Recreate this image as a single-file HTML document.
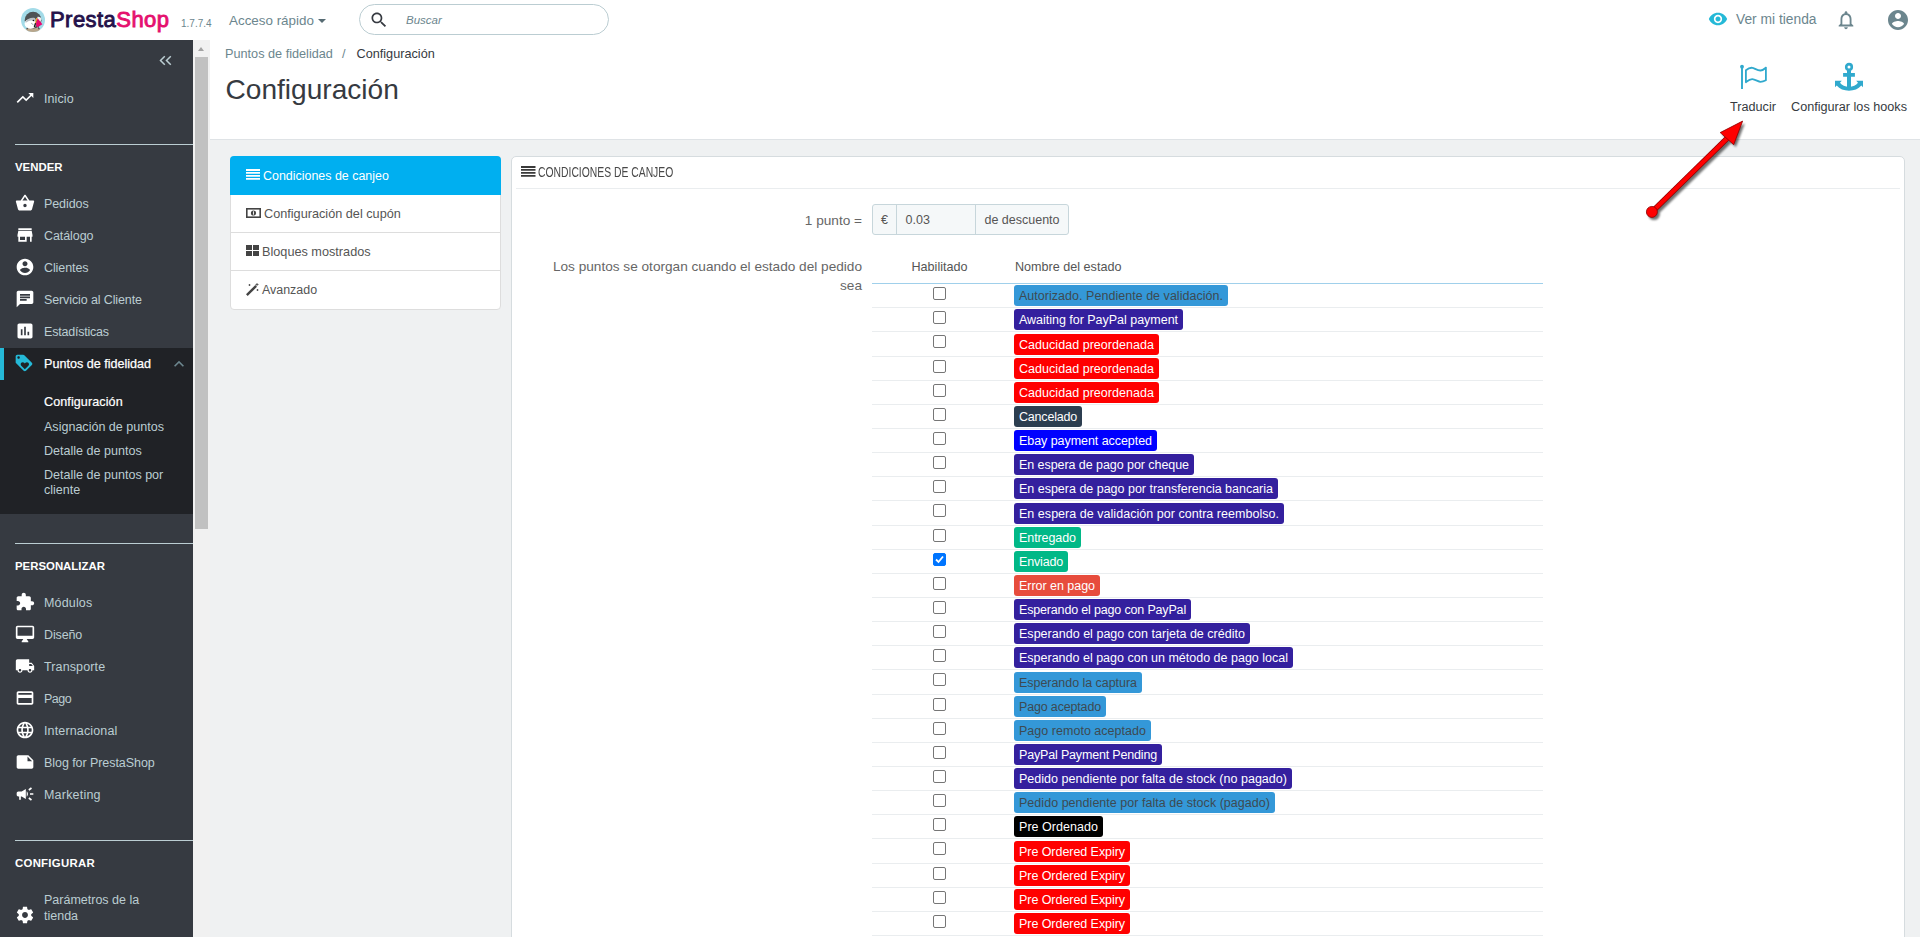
<!DOCTYPE html>
<html lang="es">
<head>
<meta charset="utf-8">
<title>Configuración • Puntos de fidelidad</title>
<style>
*{box-sizing:border-box}
html,body{margin:0;padding:0}
body{width:1920px;height:937px;overflow:hidden;position:relative;background:#eff1f2;font-family:"Liberation Sans",sans-serif;font-size:13px;color:#363a41}
a{text-decoration:none;color:inherit}
.abs{position:absolute}
/* ---------- top header ---------- */
#header{position:absolute;left:0;top:0;width:1920px;height:40px;background:#fff;z-index:5}
#logo-circle{position:absolute;left:21px;top:8px;width:24px;height:24px}
#logo-text{position:absolute;left:50px;top:6px;font-size:22px;line-height:28px;font-weight:400;letter-spacing:.45px;white-space:nowrap;-webkit-text-stroke:.9px}
#logo-text .a{color:#25124a}
#logo-text .b{color:#e5106e}
#version{position:absolute;left:181px;top:17px;font-size:10px;line-height:14px;color:#6c868e}
#quick{position:absolute;left:229px;top:12px;font-size:13.4px;line-height:18px;color:#6c868e;white-space:nowrap}
#quick .caret{display:inline-block;width:0;height:0;border-left:4.5px solid transparent;border-right:4.5px solid transparent;border-top:4.5px solid #566b73;vertical-align:middle;margin-left:4px;margin-top:-1px}
#search{position:absolute;left:359px;top:4px;width:250px;height:31px;border:1px solid #bbcdd2;border-radius:16px;background:#fff}
#search svg{position:absolute;left:9px;top:5px;width:20px;height:20px;fill:#363a41}
#search span{position:absolute;left:46px;top:7px;font-style:italic;font-size:11.5px;line-height:17px;color:#6c868e}
#shop{position:absolute;left:1736px;top:11px;font-size:13.8px;line-height:18px;color:#6c868e;white-space:nowrap}
/* ---------- sidebar ---------- */
#nav{position:absolute;left:0;top:40px;width:193px;height:897px;background:#363a41;color:#bbcdd2;font-size:12.500px;overflow:hidden}
#sb{position:absolute;left:193px;top:40px;width:17px;height:897px;background:#f1f1f1}
#sb .thumb{position:absolute;left:2px;top:17px;width:13px;height:472px;background:#c1c1c1}
#sb .up{position:absolute;left:5px;top:7px;width:0;height:0;border-left:3.5px solid transparent;border-right:3.5px solid transparent;border-bottom:4px solid #a3a3a3}
.mi{position:absolute;left:0;width:193px;height:32px}
.mi svg{position:absolute;left:14.600px;top:6.300px;width:20px;height:20px;fill:#fff}
.mi span{position:absolute;left:44px;top:9px;line-height:16px;white-space:nowrap}
.sep{position:absolute;left:15px;width:178px;height:1px;background:#bbcdd2}
.cat{position:absolute;left:15px;font-weight:700;color:#fff;font-size:11.4px;line-height:16px;white-space:nowrap}
.sub{position:absolute;left:44px;line-height:15px;color:#bbcdd2;font-size:12.55px}
/* ---------- page head ---------- */
#pagehead{position:absolute;left:210px;top:40px;width:1710px;height:100px;background:#fff;border-bottom:1px solid #dfe3e6}
#crumb{position:absolute;left:15px;top:6px;font-size:12.7px;line-height:16px;color:#6c868e;white-space:nowrap}
#crumb b{font-weight:400;color:#363a41}
#title{position:absolute;left:15.500px;top:32px;font-size:28.100px;line-height:36px;font-weight:400;color:#363a41;margin:0;white-space:nowrap}
.tb{position:absolute;top:26px;text-align:center;font-size:12.65px;line-height:16px;color:#363a41;white-space:nowrap}
.tb svg{display:block;margin:0 auto}
/* ---------- content ---------- */
#tabs{position:absolute;left:230px;top:156px;width:271px;height:154px;background:#fff;border:1px solid #ddd;border-radius:4px}
#tabs .it{position:absolute;left:0;width:269px;height:38px;border-top:1px solid #ddd;font-size:12.700px;line-height:16px;color:#555}
#tabs .it span{position:absolute;left:32px;top:11px;white-space:nowrap}
#tabs .it svg{position:absolute;left:15px;top:12px}
#tabs .act{position:absolute;left:-1px;top:-1px;width:271px;height:39px;background:#00aff0;color:#fff;border:0;border-radius:4px 4px 0 0}
#panel{position:absolute;left:511px;top:156px;width:1394px;height:800px;background:#fff;border:1px solid #d6dcdf;border-radius:5px}
#ph{position:absolute;left:4px;top:0;width:1384px;height:32px;border-bottom:1px solid #eaedef}
#ph svg{position:absolute;left:4.600px;top:9px;overflow:visible}
#ph span{position:absolute;left:22px;top:6px;font-size:14px;line-height:18px;color:#484848;white-space:nowrap;transform:scaleX(.74);transform-origin:0 50%}
.lbl{position:absolute;text-align:right;font-size:13.630px;line-height:19px;color:#666}
#ig{position:absolute;left:360px;top:47px;width:197px;height:31px;border:1px solid #c7d6db;border-radius:3px;background:#f5f8f9;font-size:12.5px;color:#555}
#ig div{position:absolute;top:0;height:29px;line-height:31px}
table#st{position:absolute;left:360px;top:95.640px;width:671px;border-collapse:collapse;font-size:12.6px;color:#555}
#st th{font-weight:400;height:31px;padding:0 0 2px 0;border-bottom:1px solid #a0d0eb;vertical-align:middle;color:#555}
#st th.c1{width:135px;text-align:center}
#st th.c2{text-align:left;padding-left:8px}
#st td{height:24.143px;padding:0;border-bottom:1px solid #eaedef;vertical-align:middle}
#st td.c1{text-align:center}
#st td.c2{padding-left:7px}
.cb{display:inline-block;width:13px;height:13px;border:1px solid #767676;border-radius:2px;background:#fff;vertical-align:middle;position:relative;top:-2.600px}
.cb.on{background:#0075ff;border-color:#0075ff}
.bd{display:inline-block;height:21px;line-height:22px;padding:0 5px;border-radius:3px;color:#fff;font-size:12.5px;white-space:nowrap;vertical-align:middle}
#st tr:nth-child(7n+4) .bd{position:relative;top:1px}
.c-blue{background:#3498d8;color:#3d4a52}
.c-ind{background:#34209e}
.c-red{background:#ff0000}
.c-can{background:#2c3e50}
.c-eb{background:#0000ff}
.c-gr{background:#01b887}
.c-err{background:#e74c3c}
.c-blk{background:#000}
</style>
</head>
<body>
<!-- HEADER -->
<div id="header">
  <svg id="logo-circle" viewBox="0 0 24 24"><defs><clipPath id="lc"><circle cx="12" cy="12" r="12"/></clipPath></defs><circle cx="12" cy="12" r="12" fill="#a3dbe8"/><g clip-path="url(#lc)"><ellipse cx="12" cy="22.600" rx="7.600" ry="3.600" fill="#b9a68c"/><path d="M5.200 20.800l1.300-1.900 1 .6-1 1.900zM18.900 20.800l-1.300-1.900-1 .6 1 1.900z" fill="#4e5355"/><circle cx="12.100" cy="12.200" r="8.400" fill="#4e5355"/><ellipse cx="9.600" cy="15.800" rx="6" ry="4.900" fill="#fff"/><path d="M4.300 14.500c1.500-3.300 5-5.300 9.500-4.600l1.500 2.300-4 3.300z" fill="#b9c0c5"/><path d="M4.600 15.500c2-2.600 5.500-3.700 9-2.300l-1 4z" fill="#fff"/><path d="M16.500 8.800c1.700-.5 3.300.3 4 2.200l-1.300 3.500-3.200-3z" fill="#eef0f0"/><path d="M15.200 9.900l1.300.3-1.700 5.600-1-.3z" fill="#f7a823"/><path d="M13.900 15l1.300.3-1 4-1.500-.5z" fill="#1a1a1a"/><path d="M16.600 10.200L21.400 16.300 15.900 19.500 14.900 16z" fill="#e9076f"/><circle cx="12.400" cy="12.500" r=".75" fill="#111"/><path d="M10.200 15.200l2.300 1.700" stroke="#555" stroke-width=".5"/></g></svg>
  <div id="logo-text"><span class="a">Presta</span><span class="b">Shop</span></div>
  <div id="version">1.7.7.4</div>
  <div id="quick">Acceso rápido<i class="caret"></i></div>
  <div id="search"><svg viewBox="0 0 24 24"><path d="M15.5 14h-.79l-.28-.27C15.41 12.59 16 11.11 16 9.5 16 5.91 13.09 3 9.5 3S3 5.91 3 9.5 5.91 16 9.5 16c1.61 0 3.09-.59 4.23-1.57l.27.28v.79l5 4.990L20.49 19l-4.990-5zm-6 0C7.01 14 5 11.990 5 9.500S7.010 5 9.500 5 14 7.010 14 9.500 11.990 14 9.500 14z"/></svg><span>Buscar</span></div>
  <svg class="abs" style="left:1708px;top:9px;width:20px;height:20px;fill:#25b9d7" viewBox="0 0 24 24"><path d="M12 4.500C7 4.500 2.730 7.610 1 12c1.730 4.390 6 7.500 11 7.500s9.270-3.110 11-7.500c-1.730-4.390-6-7.500-11-7.500zM12 17c-2.760 0-5-2.240-5-5s2.240-5 5-5 5 2.240 5 5-2.240 5-5 5zm0-8c-1.660 0-3 1.340-3 3s1.340 3 3 3 3-1.340 3-3-1.340-3-3-3z"/></svg>
  <div id="shop">Ver mi tienda</div>
  <svg class="abs" style="left:1835px;top:9px;width:22px;height:22px;fill:#6c868e" viewBox="0 0 24 24"><path d="M12 22c1.100 0 2-.9 2-2h-4c0 1.100.9 2 2 2zm6-6v-5c0-3.070-1.630-5.640-4.500-6.320V4c0-.830-.670-1.500-1.500-1.500s-1.500.670-1.500 1.500v.680C7.640 5.360 6 7.920 6 11v5l-2 2v1h16v-1l-2-2zm-2 1H8v-6c0-2.480 1.510-4.500 4-4.500s4 2.020 4 4.500v6z"/></svg>
  <svg class="abs" style="left:1886px;top:8px;width:24px;height:24px;fill:#6c868e" viewBox="0 0 24 24"><path d="M12 2C6.480 2 2 6.480 2 12s4.480 10 10 10 10-4.480 10-10S17.520 2 12 2zm0 3c1.660 0 3 1.340 3 3s-1.340 3-3 3-3-1.340-3-3 1.340-3 3-3zm0 14.200c-2.500 0-4.710-1.280-6-3.220.030-1.990 4-3.080 6-3.080 1.990 0 5.970 1.090 6 3.080-1.290 1.940-3.500 3.220-6 3.220z"/></svg>
</div>
<div id="nav">
  <svg class="abs" style="left:158px;top:14px;width:15px;height:12px" viewBox="0 0 15 12"><path d="M6.800 2.200L2.500 6.500l4.300 4.300M12.800 2.200L8.500 6.500l4.300 4.300" fill="none" stroke="#bbcdd2" stroke-width="1.500"/></svg>
  <a class="mi" style="top:42px"><svg viewBox="0 0 24 24"><path d="M16 6l2.290 2.290-4.880 4.880-4-4L2 16.590 3.410 18l6-6 4 4 6.300-6.290L22 12V6z"/></svg><span style="letter-spacing:0.085px">Inicio</span></a>
  <div class="sep" style="top:104px"></div>
  <div class="cat" style="top:119px">VENDER</div>
  <a class="mi" style="top:147px"><svg viewBox="0 0 24 24"><path d="M17.210 9l-4.380-6.560c-.19-.28-.51-.42-.83-.42-.32 0-.64.14-.83.430L6.790 9H2c-.55 0-1 .45-1 1 0 .09.010.18.040.27l2.540 9.270c.23.84 1 1.460 1.920 1.460h13c.92 0 1.690-.62 1.930-1.460l2.540-9.270L23 10c0-.55-.45-1-1-1h-4.790zM9 9l3-4.400L15 9H9zm3 8c-1.100 0-2-.9-2-2s.9-2 2-2 2 .9 2 2-.9 2-2 2z"/></svg><span style="letter-spacing:-0.084px">Pedidos</span></a>
  <a class="mi" style="top:179px"><svg viewBox="0 0 24 24"><path d="M20 4H4v2h16V4zm1 10v-2l-1-5H4l-1 5v2h1v6h10v-6h4v6h2v-6h1zm-9 4H6v-4h6v4z"/></svg><span style="letter-spacing:-0.081px">Catálogo</span></a>
  <a class="mi" style="top:211px"><svg viewBox="0 0 24 24"><path d="M12 2C6.480 2 2 6.480 2 12s4.480 10 10 10 10-4.480 10-10S17.520 2 12 2zm0 3c1.660 0 3 1.340 3 3s-1.340 3-3 3-3-1.340-3-3 1.340-3 3-3zm0 14.200c-2.500 0-4.710-1.280-6-3.220.030-1.990 4-3.080 6-3.080 1.990 0 5.970 1.090 6 3.080-1.290 1.940-3.500 3.220-6 3.220z"/></svg><span style="letter-spacing:-0.096px">Clientes</span></a>
  <a class="mi" style="top:243px"><svg viewBox="0 0 24 24"><path d="M20 2H4c-1.100 0-1.990.9-1.990 2L2 22l4-4h14c1.100 0 2-.9 2-2V4c0-1.100-.9-2-2-2zM6 9h12v2H6V9zm8 5H6v-2h8v2zm4-6H6V6h12v2z"/></svg><span style="letter-spacing:-0.113px">Servicio al Cliente</span></a>
  <a class="mi" style="top:275px"><svg viewBox="0 0 24 24"><path d="M19 3H5c-1.100 0-2 .9-2 2v14c0 1.100.9 2 2 2h14c1.100 0 2-.9 2-2V5c0-1.100-.9-2-2-2zM9 17H7v-7h2v7zm4 0h-2V7h2v10zm4 0h-2v-4h2v4z"/></svg><span style="letter-spacing:-0.208px">Estadísticas</span></a>
  <div class="abs" style="left:0;top:308px;width:193px;height:166px;background:#202226"></div>
  <div class="abs" style="left:0;top:308px;width:4px;height:32px;background:#25b9d7"></div>
  <a class="mi" style="top:307px;color:#fff;-webkit-text-stroke:.25px #fff;font-size:12.6px"><svg viewBox="0 0 24 24" style="fill:#25b9d7;left:14.200px"><path d="M21.410 11.580l-9-9C12.050 2.220 11.550 2 11 2H4c-1.100 0-2 .9-2 2v7c0 .55.220 1.050.590 1.420l9 9c.36.36.86.58 1.410.58.55 0 1.050-.22 1.410-.59l7-7c.37-.36.59-.86.59-1.410 0-.55-.23-1.060-.59-1.420zM5.500 7C4.670 7 4 6.330 4 5.500S4.670 4 5.500 4 7 4.670 7 5.500 6.330 7 5.500 7zm11.770 8.270L13 19.540l-4.270-4.270C8.280 14.810 8 14.190 8 13.500c0-1.380 1.120-2.500 2.500-2.500.69 0 1.320.28 1.770.74l.73.720.73-.73c.45-.45 1.080-.73 1.770-.73 1.380 0 2.500 1.120 2.500 2.500 0 .69-.28 1.320-.73 1.770z"/></svg><span style="letter-spacing:0">Puntos de fidelidad</span></a>
  <svg class="abs" style="left:168.500px;top:313.500px;width:20px;height:20px;fill:#6c868e" viewBox="0 0 24 24"><path d="M7.410 15.410L12 10.830l4.590 4.580L18 14l-6-6-6 6z"/></svg>
  <div class="sub" style="top:355px;color:#fff;-webkit-text-stroke:.22px #fff;letter-spacing:.1px">Configuración</div>
  <div class="sub" style="top:380px">Asignación de puntos</div>
  <div class="sub" style="top:404px">Detalle de puntos</div>
  <div class="sub" style="top:428px;width:140px">Detalle de puntos por cliente</div>
  <div class="sep" style="top:503px"></div>
  <div class="cat" style="top:518px">PERSONALIZAR</div>
  <a class="mi" style="top:546px"><svg viewBox="0 0 24 24"><path d="M20.500 11H19V7c0-1.100-.9-2-2-2h-4V3.500C13 2.120 11.880 1 10.500 1S8 2.120 8 3.500V5H4c-1.100 0-1.990.9-1.990 2v3.800H3.500c1.490 0 2.700 1.210 2.700 2.700s-1.210 2.700-2.700 2.700H2V20c0 1.100.9 2 2 2h3.800v-1.500c0-1.490 1.210-2.700 2.700-2.700 1.490 0 2.700 1.210 2.700 2.700V22H17c1.100 0 2-.9 2-2v-4h1.500c1.380 0 2.500-1.120 2.500-2.500S21.880 11 20.500 11z"/></svg><span style="letter-spacing:0.164px">Módulos</span></a>
  <a class="mi" style="top:578px"><svg viewBox="0 0 24 24"><path d="M21 2H3c-1.100 0-2 .9-2 2v12c0 1.100.9 2 2 2h7l-2 3v1h8v-1l-2-3h7c1.100 0 2-.9 2-2V4c0-1.100-.9-2-2-2zm0 12H3V4h18v10z"/></svg><span style="letter-spacing:-0.12px">Diseño</span></a>
  <a class="mi" style="top:610px"><svg viewBox="0 0 24 24"><path d="M20 8h-3V4H3c-1.100 0-2 .9-2 2v11h2c0 1.660 1.340 3 3 3s3-1.340 3-3h6c0 1.660 1.340 3 3 3s3-1.340 3-3h2v-5l-3-4zM6 18.500c-.83 0-1.500-.67-1.500-1.500s.67-1.500 1.500-1.500 1.500.67 1.500 1.500-.67 1.500-1.500 1.500zm13.500-9l1.960 2.500H17V9.500h2.500zm-1.500 9c-.83 0-1.500-.67-1.500-1.500s.67-1.500 1.500-1.500 1.500.67 1.500 1.500-.67 1.500-1.500 1.500z"/></svg><span style="letter-spacing:0.122px">Transporte</span></a>
  <a class="mi" style="top:642px"><svg viewBox="0 0 24 24"><path d="M20 4H4c-1.110 0-1.990.89-1.990 2L2 18c0 1.110.89 2 2 2h16c1.110 0 2-.89 2-2V6c0-1.110-.89-2-2-2zm0 14H4v-6h16v6zm0-10H4V6h16v2z"/></svg><span style="letter-spacing:-0.526px">Pago</span></a>
  <a class="mi" style="top:674px"><svg viewBox="0 0 24 24"><path d="M11.990 2C6.470 2 2 6.480 2 12s4.470 10 9.990 10C17.520 22 22 17.520 22 12S17.520 2 11.990 2zm6.930 6h-2.950c-.32-1.250-.78-2.450-1.380-3.560 1.840.63 3.370 1.910 4.330 3.560zM12 4.040c.83 1.200 1.480 2.530 1.910 3.960h-3.820c.43-1.430 1.080-2.760 1.910-3.960zM4.260 14C4.100 13.360 4 12.690 4 12s.1-1.360.26-2h3.380c-.08.66-.14 1.320-.14 2 0 .68.060 1.340.14 2H4.260zm.82 2h2.950c.32 1.250.78 2.450 1.380 3.560-1.840-.63-3.370-1.900-4.330-3.560zm2.950-8H5.080c.96-1.660 2.490-2.930 4.330-3.560C8.810 5.550 8.350 6.750 8.030 8zM12 19.960c-.83-1.200-1.480-2.530-1.910-3.960h3.820c-.43 1.430-1.080 2.760-1.910 3.960zM14.340 14H9.660c-.09-.66-.16-1.320-.16-2 0-.68.070-1.350.16-2h4.680c.09.65.16 1.320.16 2 0 .68-.07 1.340-.16 2zm.25 5.560c.6-1.110 1.060-2.310 1.380-3.560h2.950c-.96 1.650-2.490 2.930-4.330 3.560zM16.360 14c.08-.66.14-1.320.14-2 0-.68-.06-1.340-.14-2h3.380c.16.64.26 1.310.26 2s-.1 1.360-.26 2h-3.380z"/></svg><span style="letter-spacing:0.14px">Internacional</span></a>
  <a class="mi" style="top:706px"><svg viewBox="0 0 24 24"><path d="M22 10l-6-6H4c-1.100 0-2 .9-2 2v12.010c0 1.100.9 1.990 2 1.990l16-.010c1.100 0 2-.89 2-1.990v-8zm-7-4.500l5.500 5.500H15V5.500z"/></svg><span style="letter-spacing:-0.062px">Blog for PrestaShop</span></a>
  <a class="mi" style="top:738px"><svg viewBox="0 0 24 24"><path d="M18 11v2h4v-2h-4zm-2 6.610c.96.71 2.210 1.650 3.200 2.390.4-.53.8-1.070 1.200-1.600-.99-.74-2.240-1.680-3.200-2.400-.4.540-.8 1.080-1.200 1.610zM20.400 5.600c-.4-.53-.8-1.070-1.200-1.600-.99.74-2.240 1.680-3.200 2.400.4.530.8 1.070 1.200 1.600.96-.72 2.210-1.650 3.200-2.400zM4 9c-1.100 0-2 .9-2 2v2c0 1.100.9 2 2 2h1v4h2v-4h1l5 3V6L8 9H4zm11.500 3c0-1.330-.58-2.530-1.500-3.350v6.690c.92-.81 1.500-2.010 1.500-3.340z"/></svg><span style="letter-spacing:0.201px">Marketing</span></a>
  <div class="sep" style="top:800px"></div>
  <div class="cat" style="top:815px;letter-spacing:.27px">CONFIGURAR</div>
  <a class="mi" style="top:851px"><svg viewBox="0 0 24 24" style="top:14px"><path d="M19.430 12.980c.04-.32.070-.64.070-.98s-.03-.66-.07-.98l2.110-1.650c.19-.15.240-.42.120-.64l-2-3.460c-.12-.22-.39-.3-.61-.22l-2.490 1c-.52-.4-1.080-.73-1.690-.98l-.38-2.650C14.460 2.180 14.250 2 14 2h-4c-.25 0-.46.18-.49.420l-.38 2.650c-.61.250-1.170.59-1.690.98l-2.490-1c-.23-.09-.49 0-.61.220l-2 3.460c-.13.220-.07.49.120.64l2.110 1.650c-.04.320-.07.650-.07.980s.03.660.07.980l-2.110 1.650c-.19.150-.24.420-.12.640l2 3.460c.12.220.39.3.61.220l2.490-1c.52.4 1.080.73 1.690.98l.38 2.650c.03.240.24.420.49.420h4c.25 0 .46-.18.490-.42l.38-2.650c.61-.25 1.170-.59 1.690-.98l2.490 1c.23.090.49 0 .61-.22l2-3.460c.12-.22.07-.49-.12-.64l-2.110-1.650zM12 15.500c-1.930 0-3.500-1.570-3.500-3.500s1.570-3.500 3.500-3.500 3.500 1.570 3.500 3.500-1.570 3.500-3.500 3.500z"/></svg><span style="top:2px;white-space:normal;width:130px;line-height:15.600px">Parámetros de la tienda</span></a>
</div>
<div id="sb"><i class="up"></i><div class="thumb"></div></div>

<div id="pagehead">
  <div id="crumb">Puntos de fidelidad<span style="margin:0 11px 0 9px">/</span><b>Configuración</b></div>
  <h1 id="title">Configuración</h1>
  <svg class="abs" style="left:1525px;top:20px" width="36" height="32" viewBox="0 0 36 32"><circle cx="7" cy="6.750" r="1.900" fill="#30a9cd"/><path d="M7 6.750V28.900" stroke="#30a9cd" stroke-width="1.900" fill="none"/><path d="M10.900 10.200C13 8.500 15.500 7.600 17.300 7.800S22.500 10.600 25.500 10.500S29.500 8.500 30.900 7.600L30.900 20.300C29.500 21 27.500 21.800 25.500 21.800S20 19.200 17.300 19.100S13 20.500 10.900 22.200Z" fill="none" stroke="#30a9cd" stroke-width="1.800" stroke-linejoin="round"/></svg>
  <a class="tb" style="left:1519px;top:59px;width:48px">Traducir</a>
  <svg class="abs" style="left:1620px;top:20px" width="38" height="32" viewBox="0 0 38 32"><circle cx="19" cy="6.900" r="2.800" fill="none" stroke="#30a9cd" stroke-width="2.600"/><path d="M17 10h4v20h-4zM13.100 13h11.800v3.750H13.100z" fill="#30a9cd"/><path d="M5 20.800L11.800 20.800L10 22.800C12 25.300 15 26.900 19 27C23 26.900 26 25.300 28 22.800L26.200 20.800L33 20.800L33 27.300L31.300 25.600C28.500 29 24 30.800 19 30.800C14 30.800 9.500 29 6.700 25.600L5 27.300Z" fill="#30a9cd"/></svg>
  <a class="tb" style="left:1581px;top:59px;width:116px">Configurar los hooks</a>
</div>
<svg class="abs" style="left:1630px;top:105px;width:130px;height:125px;z-index:9" viewBox="0 0 130 125">
  <defs><filter id="sh" x="-20%" y="-20%" width="140%" height="140%"><feGaussianBlur stdDeviation="1.300"/></filter></defs>
  <g transform="translate(2.200 2.400)" opacity=".55" filter="url(#sh)"><path d="M21.900 106.900L97 33.600" stroke="#000" stroke-width="5.400"/><circle cx="21.900" cy="106.900" r="5.800" fill="#000"/><path d="M112.600 16.100L103.700 39.700L90.200 27.600z" fill="#000"/></g>
  <path d="M21.900 106.900L97 33.600" stroke="#8a0000" stroke-width="5.600"/><path d="M21.900 106.900L98 32.600" stroke="#f00" stroke-width="4.200"/>
  <circle cx="21.900" cy="106.900" r="5.500" fill="#f00" stroke="#8a0000" stroke-width=".8"/>
  <path d="M112.600 16.100L103.700 39.700L90.200 27.600z" fill="#f00" stroke="#8a0000" stroke-width=".8"/>
</svg>

<div id="tabs">
  <div class="it act"><svg width="14" height="12" viewBox="0 0 14 12" style="left:16px;top:13px"><path d="M0 .950h14.500M0 3.920h14.500M0 6.890h14.500M0 9.860h14.500" stroke="#fff" stroke-width="1.900"/></svg><span style="left:33px;top:12px;font-size:12.450px">Condiciones de canjeo</span></div>
  <div class="it" style="top:38px;border-top:0"><svg width="15" height="10" viewBox="0 0 15 10" style="top:13px"><rect x=".8" y=".8" width="13.400" height="8.400" fill="none" stroke="#444" stroke-width="1.600"/><circle cx="7.500" cy="5" r="2.600" fill="#444"/><path d="M7.500 3.300v3.400" stroke="#fff" stroke-width=".9"/></svg><span style="left:33px">Configuración del cupón</span></div>
  <div class="it" style="top:75px"><svg width="13" height="11" viewBox="0 0 13 11" style="top:12px"><path d="M0 0h6v5H0zM7 0h6v5H7zM0 6h6v5H0zM7 6h6v5H7z" fill="#444"/></svg><span style="left:31px">Bloques mostrados</span></div>
  <div class="it" style="top:113px"><svg width="13" height="13" viewBox="0 0 13 13" style="top:12px"><path d="M1.700 13L0 11.300 9.300 2l1.700 1.700z" fill="#444"/><path d="M11 0v3M9.500 1.500h3M3.500 1v2M2.500 2h2M11.500 6v2M10.500 7h2" stroke="#444" stroke-width=".8"/></svg><span style="left:31px;font-size:12.450px">Avanzado</span></div>
</div>
<div id="panel">
  <div id="ph"><svg width="14" height="12" viewBox="0 0 14 12"><path d="M0 .950h14.500M0 3.920h14.500M0 6.890h14.500M0 9.860h14.500" stroke="#3a3a3a" stroke-width="1.900"/></svg><span>CONDICIONES DE CANJEO</span></div>
  <div class="lbl" style="left:20px;top:54px;width:330px">1 punto =</div>
  <div id="ig"><div style="left:0;width:24px;text-align:center;border-right:1px solid #c7d6db">€</div><div style="left:24px;width:78px;padding-left:8.500px;background:#f5f8f9">0.03</div><div style="left:102px;width:93px;border-left:1px solid #c7d6db;text-align:center">de descuento</div></div>
  <div class="lbl" style="left:30px;top:100px;width:320px">Los puntos se otorgan cuando el estado del pedido sea</div>
  <table id="st">
    <tr><th class="c1">Habilitado</th><th class="c2">Nombre del estado</th></tr>
    <tr><td class="c1"><i class="cb"></i></td><td class="c2"><span class="bd c-blue" style="letter-spacing:0.030px">Autorizado. Pendiente de validación.</span></td></tr>
    <tr><td class="c1"><i class="cb"></i></td><td class="c2"><span class="bd c-ind" style="letter-spacing:-0.021px">Awaiting for PayPal payment</span></td></tr>
    <tr><td class="c1"><i class="cb"></i></td><td class="c2"><span class="bd c-red" style="letter-spacing:0.041px">Caducidad preordenada</span></td></tr>
    <tr><td class="c1"><i class="cb"></i></td><td class="c2"><span class="bd c-red" style="letter-spacing:0.041px">Caducidad preordenada</span></td></tr>
    <tr><td class="c1"><i class="cb"></i></td><td class="c2"><span class="bd c-red" style="letter-spacing:0.041px">Caducidad preordenada</span></td></tr>
    <tr><td class="c1"><i class="cb"></i></td><td class="c2"><span class="bd c-can" style="letter-spacing:-0.196px">Cancelado</span></td></tr>
    <tr><td class="c1"><i class="cb"></i></td><td class="c2"><span class="bd c-eb" style="letter-spacing:-0.054px">Ebay payment accepted</span></td></tr>
    <tr><td class="c1"><i class="cb"></i></td><td class="c2"><span class="bd c-ind" style="letter-spacing:-0.060px">En espera de pago por cheque</span></td></tr>
    <tr><td class="c1"><i class="cb"></i></td><td class="c2"><span class="bd c-ind" style="letter-spacing:-0.008px">En espera de pago por transferencia bancaria</span></td></tr>
    <tr><td class="c1"><i class="cb"></i></td><td class="c2"><span class="bd c-ind" style="letter-spacing:0.034px">En espera de validación por contra reembolso.</span></td></tr>
    <tr><td class="c1"><i class="cb"></i></td><td class="c2"><span class="bd c-gr" style="letter-spacing:-0.076px">Entregado</span></td></tr>
    <tr><td class="c1"><i class="cb on"><svg width="11" height="11" viewBox="0 0 11 11" style="position:absolute;left:0;top:0"><path d="M2 5.500l2.500 2.500L9 2.500" fill="none" stroke="#fff" stroke-width="1.800"/></svg></i></td><td class="c2"><span class="bd c-gr" style="letter-spacing:-0.170px">Enviado</span></td></tr>
    <tr><td class="c1"><i class="cb"></i></td><td class="c2"><span class="bd c-err" style="letter-spacing:-0.034px">Error en pago</span></td></tr>
    <tr><td class="c1"><i class="cb"></i></td><td class="c2"><span class="bd c-ind" style="letter-spacing:-0.166px">Esperando el pago con PayPal</span></td></tr>
    <tr><td class="c1"><i class="cb"></i></td><td class="c2"><span class="bd c-ind" style="letter-spacing:0.021px">Esperando el pago con tarjeta de crédito</span></td></tr>
    <tr><td class="c1"><i class="cb"></i></td><td class="c2"><span class="bd c-ind" style="letter-spacing:0.001px">Esperando el pago con un método de pago local</span></td></tr>
    <tr><td class="c1"><i class="cb"></i></td><td class="c2"><span class="bd c-blue" style="letter-spacing:-0.042px">Esperando la captura</span></td></tr>
    <tr><td class="c1"><i class="cb"></i></td><td class="c2"><span class="bd c-blue" style="letter-spacing:-0.162px">Pago aceptado</span></td></tr>
    <tr><td class="c1"><i class="cb"></i></td><td class="c2"><span class="bd c-blue" style="letter-spacing:0.026px">Pago remoto aceptado</span></td></tr>
    <tr><td class="c1"><i class="cb"></i></td><td class="c2"><span class="bd c-ind" style="letter-spacing:-0.171px">PayPal Payment Pending</span></td></tr>
    <tr><td class="c1"><i class="cb"></i></td><td class="c2"><span class="bd c-ind" style="letter-spacing:0.024px">Pedido pendiente por falta de stock (no pagado)</span></td></tr>
    <tr><td class="c1"><i class="cb"></i></td><td class="c2"><span class="bd c-blue" style="letter-spacing:0.034px">Pedido pendiente por falta de stock (pagado)</span></td></tr>
    <tr><td class="c1"><i class="cb"></i></td><td class="c2"><span class="bd c-blk" style="letter-spacing:0.039px">Pre Ordenado</span></td></tr>
    <tr><td class="c1"><i class="cb"></i></td><td class="c2"><span class="bd c-red" style="letter-spacing:-0.055px">Pre Ordered Expiry</span></td></tr>
    <tr><td class="c1"><i class="cb"></i></td><td class="c2"><span class="bd c-red" style="letter-spacing:-0.055px">Pre Ordered Expiry</span></td></tr>
    <tr><td class="c1"><i class="cb"></i></td><td class="c2"><span class="bd c-red" style="letter-spacing:-0.055px">Pre Ordered Expiry</span></td></tr>
    <tr><td class="c1"><i class="cb"></i></td><td class="c2"><span class="bd c-red" style="letter-spacing:-0.055px">Pre Ordered Expiry</span></td></tr>
    <tr><td class="c1"><i class="cb"></i></td><td class="c2"><span class="bd c-red" style="letter-spacing:-0.055px">Pre Ordered Expiry</span></td></tr>
  </table>
</div>

</body>
</html>
